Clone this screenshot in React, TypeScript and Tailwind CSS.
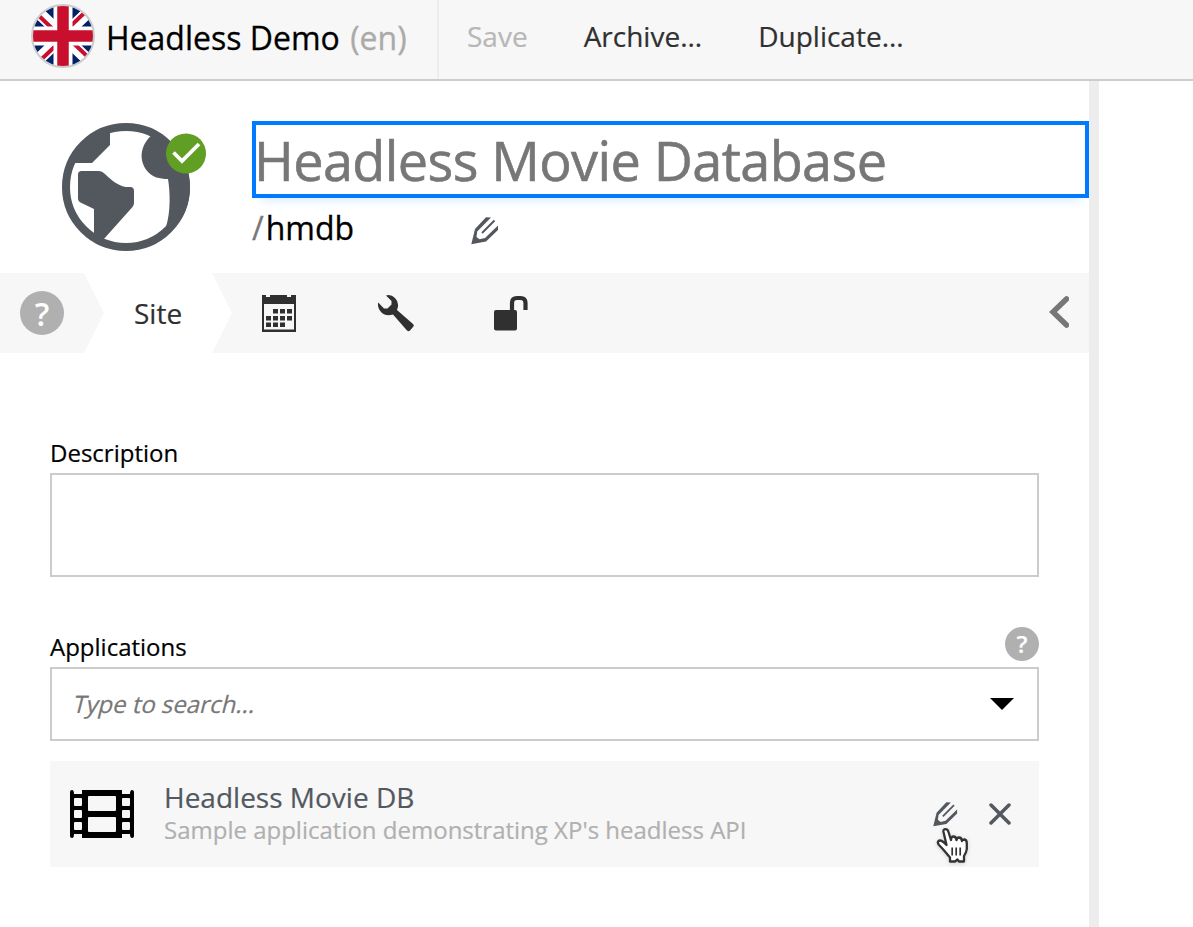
import React from 'react';

function FlagIcon() {
  return (
    <svg className="size-16 shrink-0" viewBox="31 4 64 64">
      <defs>
        <clipPath id="flag-disc">
          <circle cx="63" cy="36" r="31" />
        </clipPath>
      </defs>
      <g clipPath="url(#flag-disc)">
        <rect x="31" y="4" width="64" height="64" fill="#012169" />
        <path d="M23 -2L103 74M103 -2L23 74" stroke="#fff" strokeWidth="12" />
        <path d="M33 10.300L63 38.800M63 33.200L93 4.700M63 33.200L93 61.700M63 38.800L33 67.300" stroke="#c8102e" strokeWidth="4" />
        <path d="M63 4V68M31 36H95" stroke="#fff" strokeWidth="19" />
        <path d="M63 4V68M31 36H95" stroke="#c8102e" strokeWidth="11.500" />
      </g>
      <circle cx="63" cy="36" r="31" fill="none" stroke="#ccc" strokeWidth="2" />
    </svg>
  );
}

function SiteIcon() {
  return (
    <svg className="h-32 w-36 shrink-0" viewBox="62 123 144 128">
      <circle cx="126" cy="187" r="60" fill="#fff" stroke="#53585f" strokeWidth="8" />
      <path
        fill="#53585f"
        d="M110 130V145L92 163H73C77 149 92 134 110 130ZM81.500 171H99Q102 171 105 174C112 181 119 186 126 187H131Q134 187.500 134 191V203Q134 205 132.500 207L103 240L94 236V209L80.500 202.500Q78 201 78 199V174.500Q78 171 81.500 171ZM152 135C139 146 139 162 148 172C153 177 159 179 168 179C170 191 171 211 166 227L170 232C184 219 190 203 190 187C190 160 171 140 152 135Z"
      />
      <circle cx="186" cy="153.500" r="20" fill="#609e24" />
      <path d="M173.500 152.500L182 161L199 144" fill="none" stroke="#fff" strokeWidth="3.800" />
    </svg>
  );
}

function PencilIcon({ className }: { className: string }) {
  return (
    <svg className={className} viewBox="0 0 28 28">
      <path
        d="M.3 27.200L4 12L15 .3L20 .6L6.200 14.500L5.500 20L8.500 22.300L14 21L27 8.500V13L15 24.500Z"
        fill="#53585f"
      />
      <path d="M11 16L23.500 3.500" stroke="#53585f" strokeWidth="2" />
    </svg>
  );
}

function CalendarIcon() {
  return (
    <svg className="h-[38px] w-[34px]" viewBox="262 294 34 38">
      <path d="M262 295h4v2h4v-2h17v2h4v-2h5v37h-34Z" fill="#303030" />
      <path d="M264 304h30v25.500h-30Z" fill="#f7f7f7" />
      <path
        fill="#303030"
        d="M273 309h5v4.500h-5ZM280 309h5v4.500h-5ZM287 309h5v4.500h-5ZM266 316h5v4.500h-5ZM273 316h5v4.500h-5ZM280 316h5v4.500h-5ZM287 316h5v4.500h-5ZM266 322.500h5v4.500h-5ZM273 322.500h5v4.500h-5ZM280 322.500h5v4.500h-5Z"
      />
    </svg>
  );
}

function WrenchIcon() {
  return (
    <svg className="h-[38px] w-9" viewBox="378 294 36 38">
      <path
        fill="#303030"
        d="M386 295.500Q391 294 395 298Q400 303 397 310L413 324Q414.500 325.500 413 327L410 330.500Q408.500 332 407 330.500L393 314.500Q386 317 381 312Q377 307.500 378.200 302.500L384 308.500H387.500L391.500 304.500V301Z"
      />
    </svg>
  );
}

function UnlockIcon() {
  return (
    <svg className="h-[38px] w-9" viewBox="493 294 36 38">
      <rect x="494" y="310" width="23" height="20.500" rx="2" fill="#303030" />
      <path d="M512 311V303Q512 298 517 298H520.500Q525.500 298 525.500 303V310" fill="none" stroke="#303030" strokeWidth="4.200" />
    </svg>
  );
}

function FilmIcon() {
  return (
    <svg className="h-12 w-16 shrink-0" viewBox="0 0 64 48">
      <path
        fillRule="evenodd"
        d="M2 0Q4 0 4 4H12V0H52V4H60Q60 0 62 0Q64 0 64 2V46Q64 48 62 48Q60 48 60 44H52V48H12V44H4Q4 48 2 48Q0 48 0 46V2Q0 0 2 0ZM4 9V15Q4 16 5 16H11Q12 16 12 15V9Q12 8 11 8H5Q4 8 4 9ZM4 21V27Q4 28 5 28H11Q12 28 12 27V21Q12 20 11 20H5Q4 20 4 21ZM4 33V39Q4 40 5 40H11Q12 40 12 39V33Q12 32 11 32H5Q4 32 4 33ZM52 9V15Q52 16 53 16H59Q60 16 60 15V9Q60 8 59 8H53Q52 8 52 9ZM52 21V27Q52 28 53 28H59Q60 28 60 27V21Q60 20 59 20H53Q52 20 52 21ZM52 33V39Q52 40 53 40H59Q60 40 60 39V33Q60 32 59 32H53Q52 32 52 33ZM18 7V20Q18 21 19 21H45Q46 21 46 20V7Q46 6 45 6H19Q18 6 18 7ZM18 28V41Q18 42 19 42H45Q46 42 46 41V28Q46 27 45 27H19Q18 27 18 28Z"
      />
    </svg>
  );
}

function HandCursor() {
  return (
    <svg className="absolute top-[67px] left-[886px] h-[36px] w-[33px] drop-shadow-sm" viewBox="0 0 33 36">
      <path
        d="M7.500 4Q7 1.200 9.500 1.200Q11.800 1.200 12.500 4L15 12Q15 8.500 17.500 8.500Q20 8.500 20.500 12Q21 9.500 23 9.500Q25.500 9.500 26 13Q26.500 11.500 28.500 11.500Q31 12 30.800 16V21Q30.500 24 28 28V33.500H23L21.500 31.500L19 33.500H14V29.500Q11 26 8.500 23Q6 20 3 17Q1 14.500 2.500 13Q5 11 10.500 17Z"
        fill="#fff"
        stroke="#333"
        strokeWidth="2.300"
        strokeLinejoin="round"
      />
      <path d="M16.200 19.500V27.500M20.200 19.500V27.500M24.200 19.500V27.500" stroke="#333" strokeWidth="1.700" />
    </svg>
  );
}

export default function App() {
  return (
    <div className="flex h-[927px] w-[1193px] flex-col overflow-hidden bg-white font-['Open_Sans',sans-serif] text-black">
      <header className="flex h-[81px] shrink-0 border-b-2 border-[#ccc] bg-[#f7f7f7]">
        <div className="flex w-[439px] items-start border-r-2 border-[#ededed] pt-1 pl-[31px]">
          <FlagIcon />
          <h1 className="ml-[11px] pt-2.5 text-[32px] leading-12 whitespace-nowrap [-webkit-text-stroke:0.3px]">
            Headless Demo <span className="ml-0.5 text-[#aaa]">(en)</span>
          </h1>
        </div>
        <nav className="flex gap-14 pt-[15px] pl-7 text-[28px] leading-[42px] whitespace-nowrap text-[#303030] [-webkit-text-stroke:0.2px]">
          <span className="text-[#b7b7b7]">Save</span>
          <span>Archive...</span>
          <span>Duplicate...</span>
        </nav>
      </header>

      <main className="flex grow">
        <section className="w-[1099px] shrink-0 border-r-10 border-[#ededed]">
          <div className="flex h-48 pt-10 pl-[62px]">
            <div className="pt-0.5">
              <SiteIcon />
            </div>
            <div className="ml-[46px] grow">
              <div className="flex h-[77px] items-center border-4 border-[#007bff] text-[54px] leading-none tracking-[-0.6px] whitespace-nowrap text-[#777] shadow-[0_10px_10px_-8px_#d8e9fb] [-webkit-text-stroke:0.6px]">
                <span className="-ml-0.5">Headless Movie Database</span>
              </div>
              <div className="flex items-start">
                <div className="w-[219px] pt-1.5 text-[32px] leading-12 [-webkit-text-stroke:0.3px]">
                  <span className="mr-0.5 text-[#777]">/</span>
                  <span>hmdb</span>
                </div>
                <PencilIcon className="mt-[19px] size-7" />
              </div>
            </div>
          </div>

          <nav className="flex h-20 items-center bg-[#f7f7f7]">
            <div className="flex w-21 pl-5">
              <span className="flex size-11 items-center justify-center rounded-full bg-[#b0b0b0] pt-0.5 text-[32px] leading-none font-semibold text-white">?</span>
            </div>
            <div className="flex h-20 w-37 items-center bg-white pl-[50px] text-[28px] text-[#303030] [-webkit-text-stroke:0.2px] [clip-path:polygon(0_0,128px_0,148px_40px,128px_80px,0_80px,20px_40px)]">
              Site
            </div>
            <div className="ml-[30px] flex items-center">
              <CalendarIcon />
              <div className="ml-[82px]"><WrenchIcon /></div>
              <div className="ml-[79px]"><UnlockIcon /></div>
            </div>
            <svg className="mr-5 mb-0.5 ml-auto h-[34px] w-5" viewBox="0 0 20 34">
              <path d="M17.500 4L4 17L17.500 30" fill="none" stroke="#777" strokeWidth="5.500" strokeLinecap="round" />
            </svg>
          </nav>

          <div className="px-[50px] pt-[83px] [-webkit-text-stroke:0.2px]">
            <label className="block h-[37px] text-2xl leading-[34px]">Description</label>
            <div className="h-[104px] border-2 border-[#ccc]" />

            <div className="mt-[50px] flex h-10 justify-between">
              <label className="pt-[3px] text-2xl leading-[34px]">Applications</label>
              <span className="flex size-[34px] items-center justify-center rounded-full bg-[#b0b0b0] text-2xl leading-none font-semibold text-white">?</span>
            </div>
            <div className="flex h-[74px] items-center justify-between border-2 border-[#ccc] pr-[23px] pl-[22px] text-2xl text-[#777]">
              <span className="-skew-x-14">Type to search...</span>
              <svg className="h-3 w-6" viewBox="0 0 24 12">
                <path d="M0 0H24L12 12Z" fill="#000" />
              </svg>
            </div>

            <div className="relative mt-5 flex h-[106px] items-center bg-[#f7f7f7] pl-5">
              <FilmIcon />
              <div className="mb-[3px] ml-[30px] whitespace-nowrap">
                <div className="text-[28px] leading-[34px] text-[#53585f]">Headless Movie DB</div>
                <div className="text-2xl leading-[31px] text-[#b0b0b0]">Sample application demonstrating XP's headless API</div>
              </div>
              <PencilIcon className="mr-[31px] ml-auto h-[25px] w-[25px]" />
              <svg className="mr-7 size-[22px]" viewBox="0 0 22 22">
                <path d="M2 2L20 20M20 2L2 20" stroke="#53585f" strokeWidth="3.500" strokeLinecap="round" />
              </svg>
              <HandCursor />
            </div>
          </div>
        </section>
      </main>
    </div>
  );
}
